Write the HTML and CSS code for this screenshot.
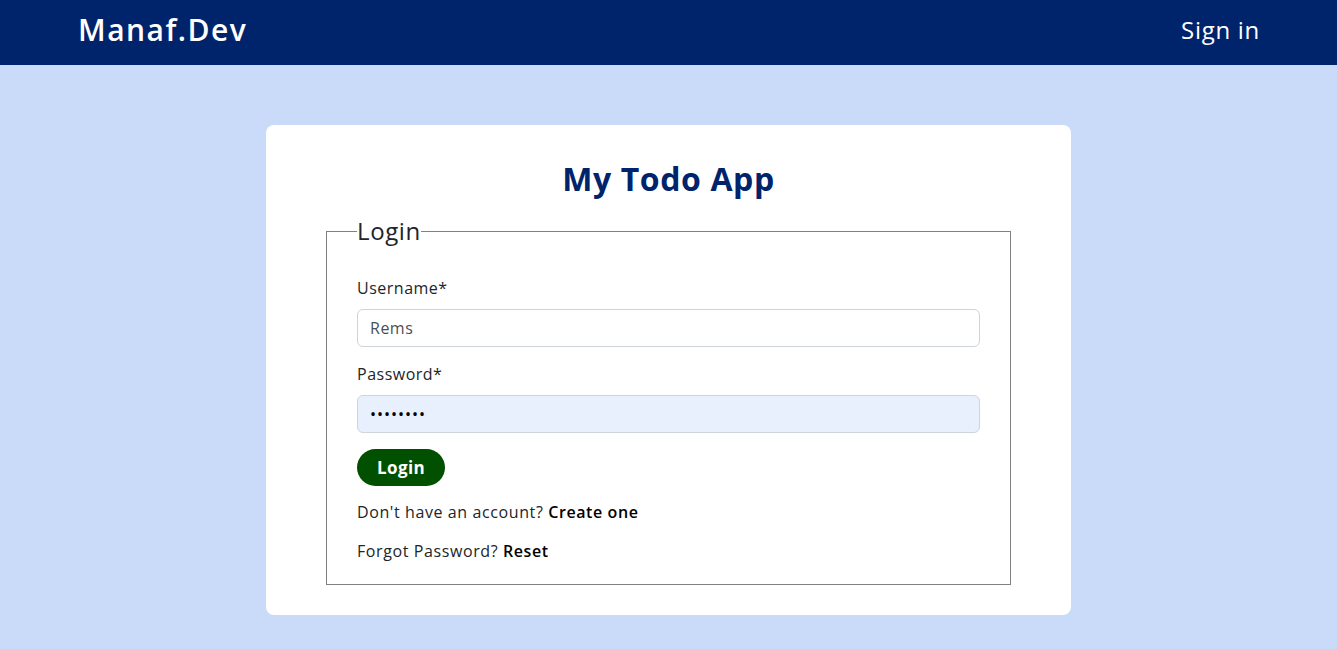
FILE: index.html
```html
<!DOCTYPE html>
<html lang="en">
<head>
<meta charset="utf-8">
<title>My Todo App</title>
<link rel="stylesheet" href="styles.css">
</head>
<body>
<header class="navbar">
  <a class="brand" href="#">Manaf.Dev</a>
  <a class="nav-link" href="#">Sign in</a>
</header>
<main class="page">
  <section class="card">
    <h1 class="title">My Todo App</h1>
    <form class="login-form">
      <fieldset class="fieldset">
        <legend class="legend">Login</legend>
        <div class="field">
          <label class="label" for="username">Username*</label>
          <input class="input" id="username" type="text" value="Rems">
        </div>
        <div class="field">
          <label class="label" for="password">Password*</label>
          <input class="input input-filled" id="password" type="password" value="password">
        </div>
        <button class="btn" type="button">Login</button>
        <p class="hint">Don't have an account? <a href="#" class="hint-link">Create one</a></p>
        <p class="hint">Forgot Password? <a href="#" class="hint-link">Reset</a></p>
      </fieldset>
    </form>
  </section>
</main>
</body>
</html>
```
FILE: styles.css
```css
* { box-sizing: border-box; }
html, body { margin: 0; padding: 0; }
body {
  font-family: "Open Sans", "Noto Sans", sans-serif;
  background: #c9dbf9;
  color: #212529;
  min-height: 649px;
  letter-spacing: 0.5px;
}
.navbar {
  height: 65px;
  background: #00246b;
  display: flex;
  align-items: center;
  justify-content: space-between;
  padding: 0 77px 6px 78px;
}
.brand {
  color: #fff;
  text-decoration: none;
  font-size: 30px;
  font-weight: 600;
  letter-spacing: 1.5px;
}
.nav-link {
  color: #fff;
  text-decoration: none;
  font-size: 24px;
  letter-spacing: 0.7px;
}
.page {
  display: flex;
  justify-content: center;
  padding-top: 60px;
}
.card {
  width: 805px;
  background: #fff;
  border-radius: 8px;
  padding: 32px 60px 30px;
}
.title {
  margin: 0 0 15px;
  text-align: center;
  font-size: 32px;
  font-weight: 700;
  color: #00246b;
  line-height: 44px;
  letter-spacing: 0.6px;
}
.login-form { margin: 0; }
.fieldset {
  margin: 0;
  border: 1px solid #808080;
  padding: 30px 30px 21px;
}
.legend {
  font-size: 24px;
  padding: 0;
  line-height: 30px;
  color: #212529;
  letter-spacing: 0.6px;
}
.field { margin-bottom: 15px; }
.label {
  display: block;
  font-size: 16px;
  line-height: 24px;
  margin-bottom: 9px;
}
.input {
  display: block;
  width: 100%;
  height: 38px;
  border: 1px solid #ced4da;
  border-radius: 6px;
  padding: 0 12px;
  font-family: inherit;
  font-size: 16px;
  letter-spacing: 0.5px;
  color: #495057;
  background: #fff;
}
.input-filled {
  background: #e8f0fe;
  color: #000;
  letter-spacing: 1px;
}
.btn {
  display: inline-block;
  height: 37px;
  padding: 0 20px;
  border: none;
  border-radius: 19px;
  background: #005000;
  color: #fff;
  font-family: inherit;
  font-size: 17px;
  font-weight: 700;
  letter-spacing: 0.4px;
  margin-top: 1px;
}
.hint {
  margin: 14px 0 0;
  font-size: 16px;
  line-height: 24px;
  letter-spacing: 0.6px;
}
.hint + .hint { margin-top: 15px; }
.hint-link {
  color: #000;
  font-weight: 600;
  text-decoration: none;
}
```
